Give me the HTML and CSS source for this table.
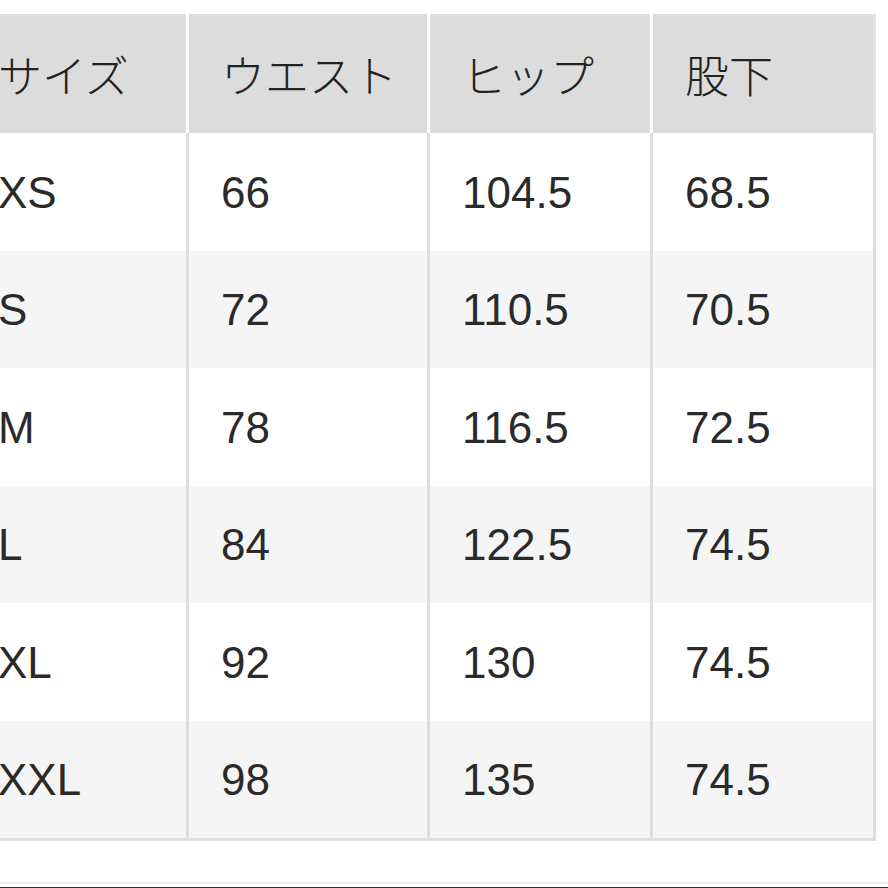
FILE: index.html
```html
<!DOCTYPE html>
<html lang="ja">
<head>
<meta charset="utf-8">
<link rel="stylesheet" href="styles.css">
</head>
<body>
<div class="sheet">
  <div class="table">
    <div class="cell head">サイズ</div>
    <div class="cell head">ウエスト</div>
    <div class="cell head">ヒップ</div>
    <div class="cell head last">股下</div>

    <div class="cell">XS</div><div class="cell">66</div><div class="cell">104.5</div><div class="cell">68.5</div>
    <div class="cell alt">S</div><div class="cell alt">72</div><div class="cell alt">110.5</div><div class="cell alt">70.5</div>
    <div class="cell">M</div><div class="cell">78</div><div class="cell">116.5</div><div class="cell">72.5</div>
    <div class="cell alt">L</div><div class="cell alt">84</div><div class="cell alt">122.5</div><div class="cell alt">74.5</div>
    <div class="cell">XL</div><div class="cell">92</div><div class="cell">130</div><div class="cell">74.5</div>
    <div class="cell alt">XXL</div><div class="cell alt">98</div><div class="cell alt">135</div><div class="cell alt">74.5</div>
  </div>
  <div class="rule"></div>
  <div class="dark"></div>
</div>
</body>
</html>
```
FILE: styles.css
```css
html, body {
  margin: 0;
  padding: 0;
  background: #ffffff;
  overflow: hidden;
}
.sheet {
  width: 888px;
  height: 888px;
  overflow: hidden;
  padding-top: 14px;
  box-sizing: border-box;
}
.table {
  margin-left: -34px;
  display: grid;
  grid-template-columns: 223px 241px 223px 223px;
  grid-template-rows: 119px repeat(6, 117.5px);
  border-bottom: 3px solid #dedede;
  width: max-content;
  font-family: "Liberation Sans", "Noto Sans CJK JP", sans-serif;
  font-size: 44px;
  color: #2a2a2a;
}
.cell {
  box-sizing: border-box;
  display: flex;
  align-items: center;
  padding-left: 32px;
  padding-top: 2px;
  background: #ffffff;
  border-right: 3px solid #dedede;
}
.cell.alt {
  background: #f5f5f5;
}
.cell.head {
  padding-top: 0;
  background: #dcdcdc;
  border-right: 3px solid #ffffff;
  font-family: "Noto Sans CJK JP", "Liberation Sans", sans-serif;
  font-weight: 300;
  color: #222222;
}
.cell.head.last {
  border-right: 3px solid #e2e2e2;
}
.rule {
  margin-top: 41px;
  height: 2px;
  background: #ececec;
}
.dark {
  margin-top: 3px;
  height: 4px;
  background: #333333;
}
```
